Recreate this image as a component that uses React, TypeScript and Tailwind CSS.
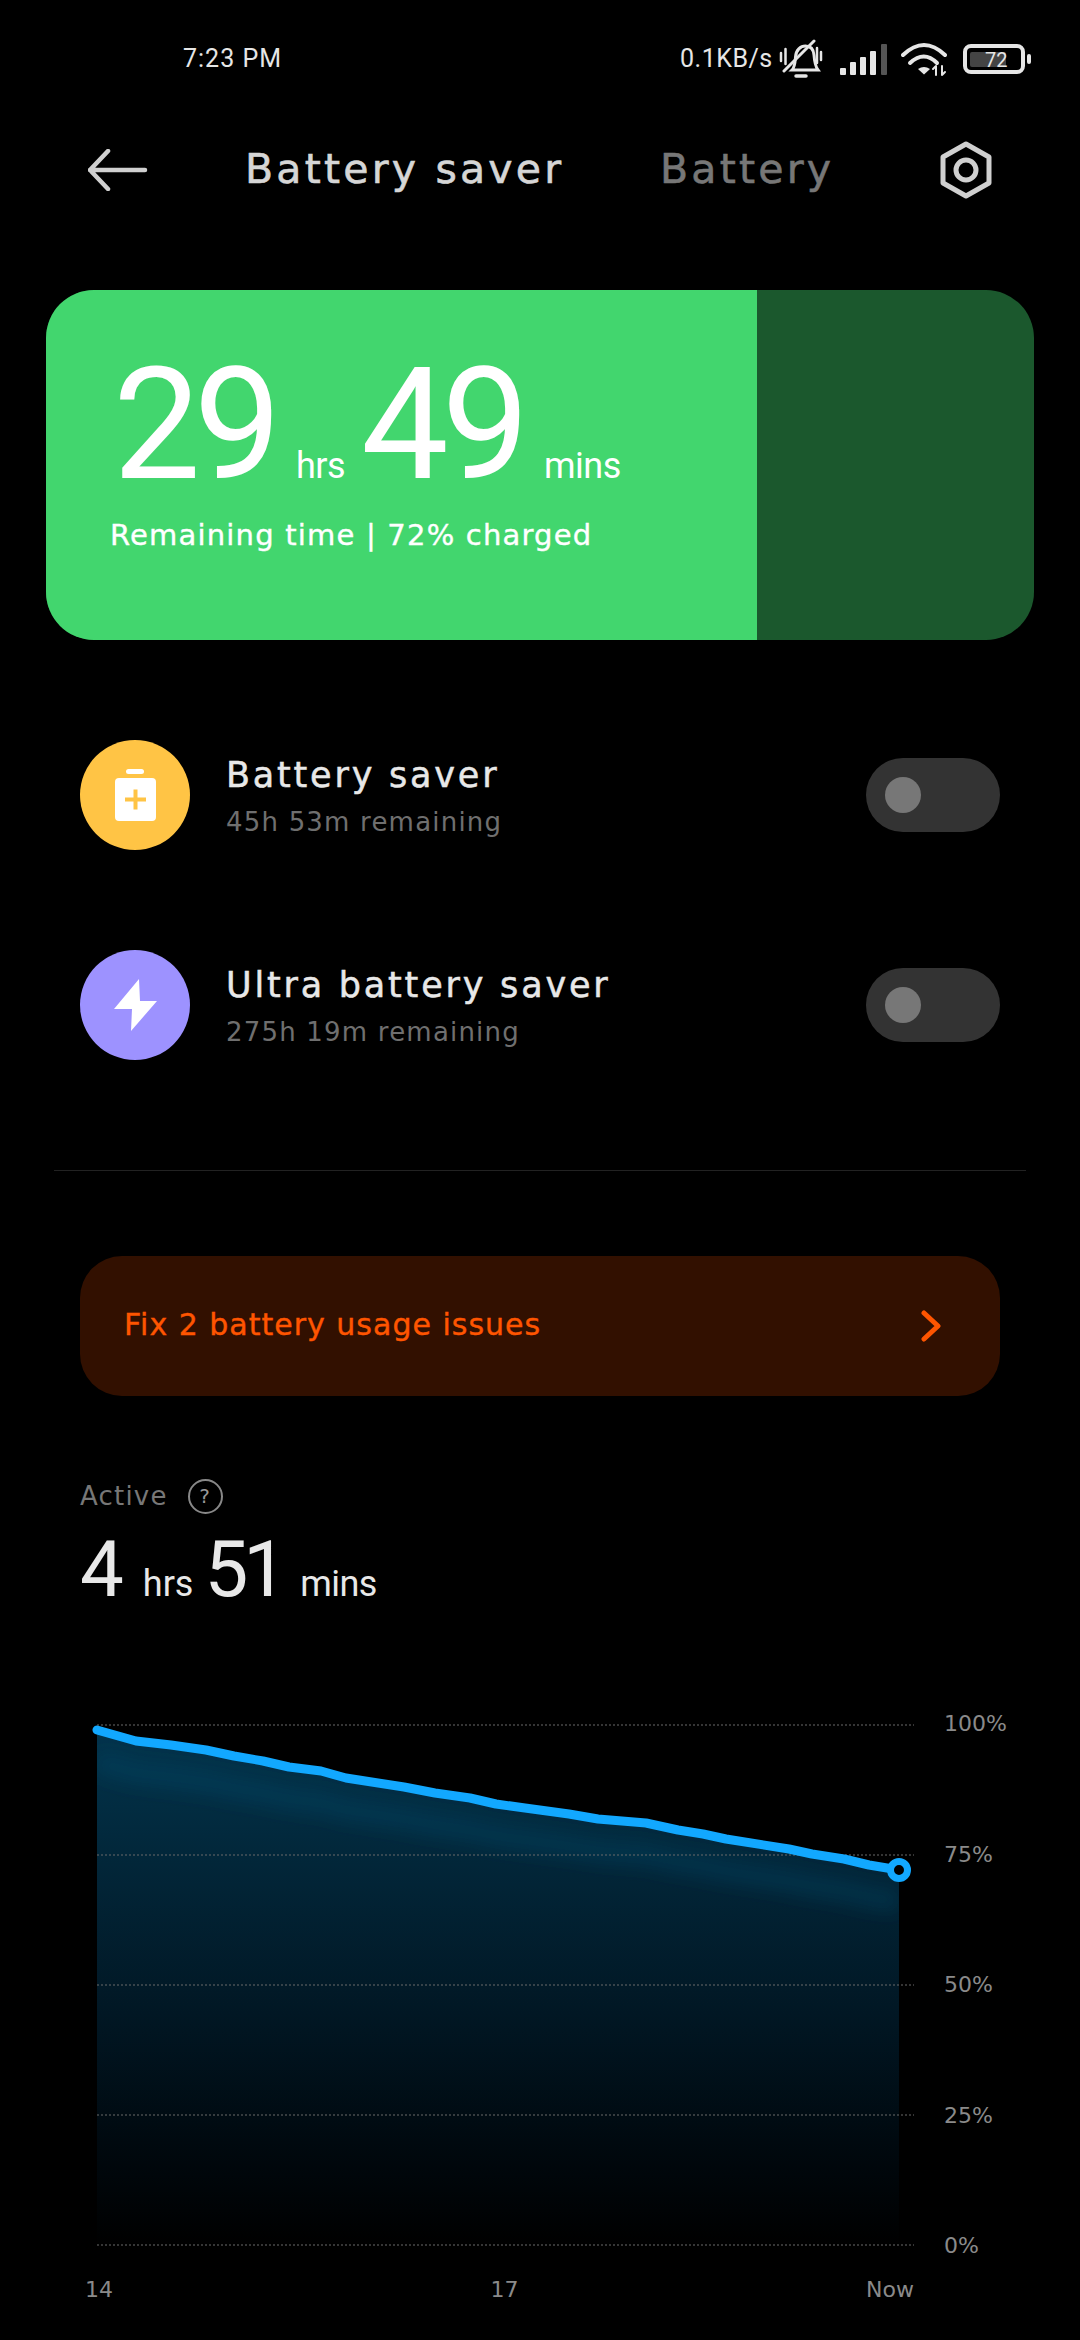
const line =
  "97,1729 136,1740 171,1744 206,1749 234,1755 263,1760 289,1766 321,1770 346,1777 404,1786 435,1792 470,1797 496,1803 525,1807 569,1813 598,1818 646,1822 678,1829 703,1833 726,1838 789,1848 812,1853 844,1858 869,1864 899,1869";

// chart svg starts at x=80, y=1710
const points = line.split(" ").map((p) => {
  const [x, y] = p.split(",").map(Number);
  return [x - 80, y - 1710];
});
const linePath = points.map((p) => p.join(",")).join(" ");
const bandPath = points.map((p) => `${p[0]},${p[1] + 32}`).join(" ");
const areaPath = `${linePath} 819,534 17,534`;

function MuteBell() {
  return (
    <svg width="44" height="40" viewBox="0 0 44 40" fill="none" stroke="#e6e6e6" strokeWidth="3" strokeLinecap="round">
      <path d="M2 14v8M6.500 10v15M38 9v15M42 13v8" strokeWidth="2.500" />
      <path d="M13 31c3-3 3-7 3.500-13 .5-7 5-11 10-11 5 0 8 3 8.500 9 .5 7 1 11 4 15H13z" />
      <path d="M5 32 35 2" />
      <path d="M17 37h10" strokeWidth="3.500" />
    </svg>
  );
}

function Signal() {
  return (
    <svg width="48" height="31" viewBox="0 0 48 31">
      <rect x="0" y="24" width="6" height="7" rx="1" fill="#e6e6e6" />
      <rect x="10" y="18" width="6" height="13" rx="1" fill="#e6e6e6" />
      <rect x="20" y="13" width="6" height="18" rx="1" fill="#e6e6e6" />
      <rect x="30" y="7" width="6" height="24" rx="1" fill="#e6e6e6" />
      <rect x="41" y="0" width="6" height="31" rx="1" fill="#555" />
    </svg>
  );
}

function Wifi() {
  return (
    <svg width="46" height="35" viewBox="0 0 46 35" fill="none" stroke="#e6e6e6" strokeWidth="4" strokeLinecap="round">
      <path d="M2 13Q23-7 44 13" />
      <path d="M9 21Q23 8 36 21" />
      <path d="M17 27Q23 23 29 27L23 32.500Z" fill="#e6e6e6" stroke="none" />
      <path d="M35 24v9M32 27l3-3M41 24v9M41 33l3-3" strokeWidth="2" />
    </svg>
  );
}

function BatteryStatus() {
  return (
    <div className="flex items-center gap-[2px]">
      <div className="relative w-[62px] h-[30px] rounded-[8px] border-[4px] border-[#e6e6e6]">
        <div className="w-[36px] h-[15px] ml-[3px] mt-[4px] rounded-[2px] bg-[#444]"></div>
        <span className="absolute left-[18px] top-[1px] text-[20px] leading-[22px] text-[#e6e6e6]">72</span>
      </div>
      <div className="w-[4px] h-[10px] rounded-full bg-[#e6e6e6]"></div>
    </div>
  );
}

function Toggle() {
  return (
    <div className="w-[134px] h-[74px] rounded-[37px] bg-[#333] flex items-center pl-[19px]">
      <div className="w-[36px] h-[36px] rounded-full bg-[#777]"></div>
    </div>
  );
}

function SaverRow({ icon, bg, title, sub }: { icon: React.ReactNode; bg: string; title: string; sub: string }) {
  return (
    <div className="flex items-center h-[110px] pl-[80px] pr-[80px]">
      <div className={`w-[110px] h-[110px] rounded-full ${bg}`}>{icon}</div>
      <div className="ml-[36px] flex-1 font-['DejaVu_Sans']">
        <div className="text-[35px] leading-[44px] mt-[1px] tracking-[2.800px] [-webkit-text-stroke:0.5px_#e8e8e8] text-[#e8e8e8]">{title}</div>
        <div className="text-[26px] leading-[34px] mt-[8px] tracking-[1.200px] text-[#6f6f6f]">{sub}</div>
      </div>
      <Toggle />
    </div>
  );
}

export default function App() {
  return (
    <main className="w-[1080px] h-[2340px] bg-black font-['Roboto',sans-serif] overflow-hidden">
      {/* status bar */}
      <div className="h-[140px] pt-[41px]">
        <div className="flex items-center h-[36px] pl-[183px] text-[25px] text-[#e6e6e6]">
          <span className="w-[497px] tracking-[1px]">7:23 PM</span>
          <span className="w-[99px] tracking-[0.5px]">0.1KB/s</span>
          <MuteBell />
          <div className="ml-[17px]"><Signal /></div>
          <div className="ml-[13px]"><Wifi /></div>
          <div className="ml-[16px]"><BatteryStatus /></div>
        </div>
      </div>

      {/* nav */}
      <div className="flex items-center h-[60px] pl-[88px] font-['DejaVu_Sans'] text-[41px] tracking-[3.200px] [-webkit-text-stroke:0.6px_currentColor]">
        <svg width="60" height="42" viewBox="0 0 60 42" fill="none" stroke="#d0d0d0" strokeWidth="4.500" strokeLinecap="round" strokeLinejoin="round">
          <path d="M2 21H57M20 2 2 21l18 19" />
        </svg>
        <span className="ml-[97px] w-[415px] text-[#d6d6d6]">Battery saver</span>
        <span className="w-[279px] text-[#777]">Battery</span>
        <svg width="54" height="58" viewBox="0 0 54 58" fill="none" stroke="#d0d0d0" strokeWidth="5">
          <path d="M27 3 50 16V42L27 55 4 42V16Z" strokeLinejoin="round" />
          <circle cx="27" cy="29" r="10" />
        </svg>
      </div>

      {/* remaining card */}
      <div className="mt-[90px] ml-[46px] w-[988px] h-[350px] rounded-[48px] overflow-hidden bg-[#1b582d] relative">
        <div className="w-[711px] h-full bg-[#42d66e] pl-[64px] pt-[57px] text-white">
          <div className="flex items-baseline h-[165px] leading-none">
            <span className="text-[156px] tracking-[-7px] w-[183px] ml-[3px]">29</span>
            <span className="text-[36px] tracking-[-0.5px] w-[65px]">hrs</span>
            <span className="text-[156px] tracking-[-7px] w-[183px]">49</span>
            <span className="text-[36px] tracking-[-0.5px]">mins</span>
          </div>
          <div className="font-['DejaVu_Sans'] text-[29px] leading-[38px] mt-[4px] tracking-[1.200px] [-webkit-text-stroke:0.4px_#fff]">Remaining time | 72% charged</div>
        </div>
      </div>

      {/* saver modes */}
      <div className="mt-[100px] flex flex-col gap-[100px]">
        <SaverRow
          bg="bg-[#ffc445]"
          title="Battery saver"
          sub="45h 53m remaining"
          icon={
            <svg width="110" height="110" viewBox="0 0 110 110">
              <rect x="46" y="29" width="18" height="5" rx="2.500" fill="#fff" />
              <rect x="35" y="38" width="41" height="43" rx="4" fill="#fff" />
              <path d="M45 59.500H66M55.500 49.500V69.500" stroke="#ffc445" strokeWidth="4" />
            </svg>
          }
        />
        <SaverRow
          bg="bg-[#9d92ff]"
          title="Ultra battery saver"
          sub="275h 19m remaining"
          icon={
            <svg width="110" height="110" viewBox="0 0 110 110">
              <path d="M59 29 34 59H52L51 81 77 51H60Z" fill="#fff" strokeLinejoin="round" />
            </svg>
          }
        />
      </div>

      <div className="mt-[110px] mx-[54px] h-[1px] bg-[#222]"></div>

      {/* issues banner */}
      <div className="mt-[85px] mx-[80px] h-[140px] rounded-[42px] bg-[#321000] flex items-center justify-between pl-[44px] pr-[58px] font-['DejaVu_Sans'] text-[#ff5500]">
        <span className="text-[30px] -mt-[4px] tracking-[1px] [-webkit-text-stroke:0.4px_#ff5500]">Fix 2 battery usage issues</span>
        <svg width="22" height="32" viewBox="0 0 22 32" fill="none" stroke="#ff5500" strokeWidth="5" strokeLinecap="round" strokeLinejoin="round">
          <path d="M4 3 18 16 4 29" />
        </svg>
      </div>

      {/* active */}
      <div className="mt-[82px] ml-[80px] flex items-center h-[36px] font-['DejaVu_Sans'] text-[26px] tracking-[1.200px] text-[#777]">
        <span>Active</span>
        <span className="ml-[20px] w-[35px] h-[35px] rounded-full border-2 border-[#888] flex items-center justify-center text-[20px] text-[#999]">?</span>
      </div>
      <div className="mt-[16px] ml-[80px] flex items-baseline h-[80px] text-[#e8e8e8]">
        <span className="text-[78px] leading-[80px]">4</span>
        <span className="ml-[19px] text-[36px]">hrs</span>
        <span className="ml-[11px] text-[78px] leading-[80px] tracking-[-5px]">51</span>
        <span className="ml-[18px] text-[36px] tracking-[-0.5px]">mins</span>
      </div>

      {/* chart */}
      <div className="mt-[101px] ml-[80px] flex">
        <svg width="840" height="540" viewBox="0 0 840 540">
          <defs>
            <linearGradient id="area" x1="0" y1="0" x2="0" y2="1">
              <stop offset="0" stopColor="#02344c" />
              <stop offset="0.3" stopColor="#022436" />
              <stop offset="0.55" stopColor="#011724" />
              <stop offset="0.8" stopColor="#00090f" />
              <stop offset="1" stopColor="#000" />
            </linearGradient>
            <filter id="soft" x="-5%" y="-20%" width="110%" height="140%">
              <feGaussianBlur stdDeviation="9" />
            </filter>
            <clipPath id="clip">
              <polygon points={areaPath} />
            </clipPath>
          </defs>
          <polygon points={areaPath} fill="url(#area)" />
          <g clipPath="url(#clip)">
            <polyline points={bandPath} fill="none" stroke="#05506f" strokeOpacity="0.3" strokeWidth="22" filter="url(#soft)" />
          </g>
          {[14, 144, 274, 404, 534].map((y) => (
            <line key={y} x1="17" x2="834" y1={y} y2={y} stroke="#6a6a6a" strokeWidth="1" strokeDasharray="2 2" />
          ))}
          <polyline points={linePath} fill="none" stroke="#12a8ff" strokeWidth="9" strokeLinecap="round" strokeLinejoin="round" />
          <circle cx="819" cy="159" r="8.500" fill="#000" stroke="#12a8ff" strokeWidth="7" />
        </svg>
        <div className="ml-[24px] h-[552px] -mt-[2px] flex flex-col justify-between font-['DejaVu_Sans'] text-[22px] leading-[30px] text-[#8a8a8a]">
          <span>100%</span>
          <span>75%</span>
          <span>50%</span>
          <span>25%</span>
          <span>0%</span>
        </div>
      </div>
      <div className="mt-[14px] ml-[85px] w-[829px] flex justify-between font-['DejaVu_Sans'] text-[22px] leading-[30px] text-[#8a8a8a]">
        <span>14</span>
        <span className="ml-[30px]">17</span>
        <span>Now</span>
      </div>
    </main>
  );
}
